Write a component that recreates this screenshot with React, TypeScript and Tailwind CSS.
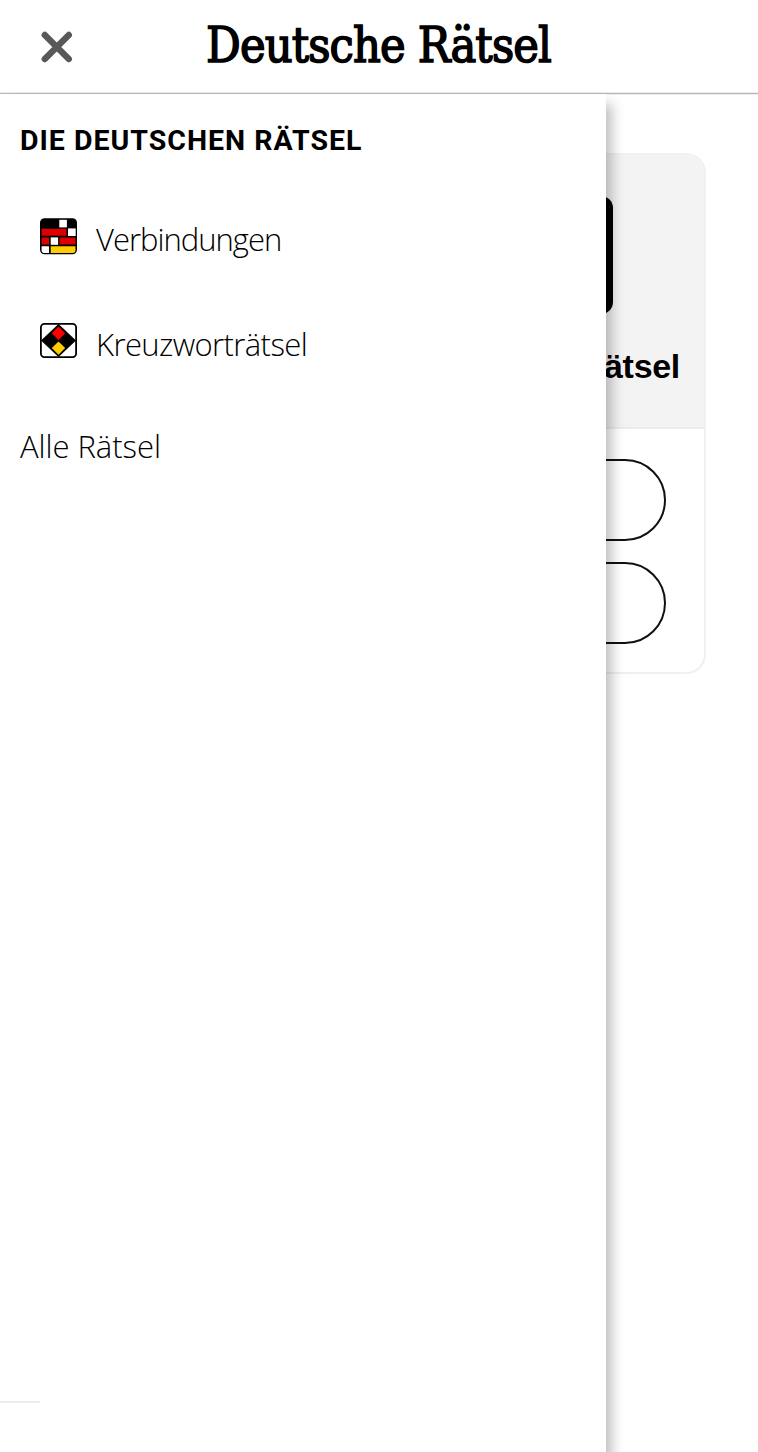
function CloseIcon() {
  return (
    <svg width="32" height="32" viewBox="0 0 32 32" aria-hidden="true">
      <path d="M3.8 4 27.8 28M27.8 4 3.8 28" stroke="#585858" strokeWidth="6.4" strokeLinecap="round" />
    </svg>
  );
}

function ConnectionsIcon() {
  return (
    <svg width="37" height="37" viewBox="0 0 37 37" aria-hidden="true">
      <rect width="37" height="36" y="0.3" rx="4.5" fill="#000" />
      <rect x="19.3" y="1.8" width="7.6" height="7.6" fill="#fff" />
      <path d="M1.6 10.7h24.9v7H1.6z" fill="#dd0000" />
      <rect x="28" y="10.4" width="7.7" height="7.6" fill="#fff" />
      <path d="M1.6 19.6h7.4v7H1.6zM19.5 19.6h16v7h-16z" fill="#dd0000" />
      <rect x="10.7" y="19.4" width="7.4" height="7.4" fill="#fff" />
      <path d="M1.6 28.3H9v6.6H4.2a2.6 2.6 0 0 1-2.6-2.6z" fill="#fff" />
      <path d="M10.7 28.3h24.8v4a2.6 2.6 0 0 1-2.6 2.6H10.7z" fill="#ffcc00" />
    </svg>
  );
}

function CrosswordIcon() {
  return (
    <svg width="37" height="35" viewBox="0 0 37 35" aria-hidden="true">
      <rect x="0.9" y="0.9" width="35.2" height="33.2" rx="3.6" fill="#fff" stroke="#000" strokeWidth="1.8" />
      <path d="M18.5 1 36 17.5 18.5 34 1 17.5z" fill="#000" />
      <path d="m18.5 3.6 6.7 6.7-6.7 6.7-6.7-6.7z" fill="#ff0000" />
      <path d="m18.5 18.4 6.7 6.7-6.7 6.7-6.7-6.7z" fill="#ffcc00" />
    </svg>
  );
}

export default function App() {
  return (
    <div className="relative h-[1452px] w-[758px] overflow-hidden bg-white font-['Open_Sans',sans-serif] text-black">
      <header className="flex h-[94px] items-start border-b border-[#b8b8b8] shadow-[inset_0_-1px_0_#ececec,0_1px_0_#ececec]">
        <button className="ml-[41px] mt-[31px]" aria-label="Menü schließen">
          <CloseIcon />
        </button>
        <svg className="ml-[123px] mt-[4px] overflow-visible" width="370" height="80" role="img" aria-label="Deutsche Rätsel">
          <text
            x="10"
            y="58.2"
            textLength="345"
            lengthAdjust="spacingAndGlyphs"
            letterSpacing="-1"
            fontFamily="'DejaVu Serif', serif"
            fontSize="48"
            stroke="#000"
            strokeWidth="1.6"
          >
            Deutsche Rätsel
          </text>
        </svg>
      </header>

      <main className="flex justify-end pr-[52px] pt-[59px]">
        <section className="h-[521px] w-[653px] overflow-hidden rounded-[20px] border-2 border-[#f0f0f0]">
          <div className="flex h-[274px] flex-col items-end border-b-2 border-[#ececec] bg-[#f3f3f3] pr-[24px]">
            <div className="mr-[67px] mt-[41px] h-[118px] w-[118px] rounded-[12px] bg-black" />
            <h2 className="mt-[29px] font-['Liberation_Sans',sans-serif] text-[34px] font-bold leading-[46px] tracking-[-0.3px]">
              Kreuzworträtsel
            </h2>
          </div>
          <div className="flex flex-col gap-[20.5px] pl-[37px] pr-[38px] pt-[30px]">
            <div className="h-[82px] rounded-full border-2 border-[#111]" />
            <div className="h-[82px] rounded-full border-2 border-[#111]" />
          </div>
        </section>
      </main>

      <div className="absolute left-0 top-[94px] h-[1400px] w-[606px] bg-white shadow-[6px_10px_12px_rgba(0,0,0,0.25)]">
        <nav className="flex flex-col pl-[20px]">
          <h3 className="mt-[28px] font-['Roboto',sans-serif] text-[28.5px] font-bold leading-[38px] tracking-[1px]">
            DIE DEUTSCHEN RÄTSEL
          </h3>
          <a className="ml-[20px] mt-[56px] flex h-[42px] items-center gap-[19px] text-[31px] font-light leading-[42px] tracking-[-1px]">
            <span className="-mt-[2px]"><ConnectionsIcon /></span>
            <span className="mt-[3px]">Verbindungen</span>
          </a>
          <a className="ml-[20px] mt-[63px] flex h-[42px] items-center gap-[19px] text-[31px] font-light leading-[42px] tracking-[-0.6px]">
            <span className="-mt-[4px]"><CrosswordIcon /></span>
            <span className="mt-[3px]">Kreuzworträtsel</span>
          </a>
          <a className="mt-[62px] text-[31px] font-light leading-[42px] tracking-[-0.05px]">Alle Rätsel</a>
        </nav>
        <div className="mt-[934px] h-[2px] w-[40px] bg-[#ececec]" />
      </div>
    </div>
  );
}
